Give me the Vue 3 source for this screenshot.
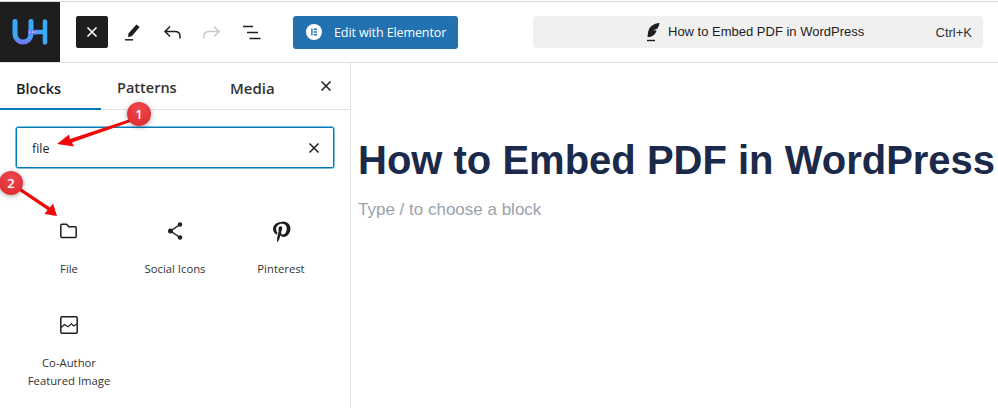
<script setup>
const blocks = [
  { label: 'File', icon: 'file' },
  { label: 'Social Icons', icon: 'share' },
  { label: 'Pinterest', icon: 'pin' },
  { label: 'Co-Author Featured Image', icon: 'image' },
]
</script>

<template>
  <div class="page">
    <header class="top">
      <div class="logo">
        <svg width="36" height="30" viewBox="0 0 36 30" fill="none">
          <defs>
            <linearGradient id="lg" x1="0" y1="0" x2="0" y2="1">
              <stop offset="0.72" stop-color="#38a9fb" />
              <stop offset="1" stop-color="#6f7cf8" />
            </linearGradient>
          </defs>
          <path d="M3 4.500V17a8 8 0 0 0 16 0V4.500" stroke="url(#lg)" stroke-width="5" stroke-linecap="round" />
          <path d="M33 4.500v21" stroke="#38a9fb" stroke-width="4.500" stroke-linecap="round" />
          <path d="M19 15h14" stroke="#38a9fb" stroke-width="4.500" />
          <rect x="16" y="13" width="9" height="4.500" rx="0.500" fill="#6f78f8" />
          <path d="M17.500 15.200h1M20 15.200h1M22.500 15.200h1" stroke="#fff" stroke-width="1.200" />
        </svg>
      </div>
      <div class="tools">
        <button class="closebtn">
          <svg width="24" height="24" viewBox="0 0 24 24"><path d="M7.500 7.500l9 9M16.500 7.500l-9 9" stroke="#fff" stroke-width="1.600" /></svg>
        </button>
        <svg class="tool first" width="24" height="24" viewBox="0 0 24 24"><path d="M16.500 4.500l3.200 2.600-7.700 8.900-4 1.300.6-4z" fill="#1e1e1e" /><path d="M5 19.800h8" stroke="#1e1e1e" stroke-width="1.500" /></svg>
        <svg class="tool" width="24" height="24" viewBox="0 0 24 24" fill="none"><path d="M20 18.500v-2.200c0-3-2-4.800-5-4.800H5.500M10 6.500l-5 5 5 5" stroke="#1e1e1e" stroke-width="1.500" /></svg>
        <svg class="tool" width="24" height="24" viewBox="0 0 24 24" fill="none"><path d="M4 18.500v-2.200c0-3 2-4.800 5-4.800h9.500M14 6.500l5 5-5 5" stroke="#c8c8c8" stroke-width="1.500" /></svg>
        <svg class="tool" width="24" height="24" viewBox="0 0 24 24" fill="none"><path d="M3 6.500h10M7 12.500h11M9.500 18.500h11" stroke="#1e1e1e" stroke-width="1.500" /></svg>
        <button class="elementor">
          <svg width="16" height="16" viewBox="0 0 16 16"><circle cx="8" cy="8" r="8" fill="#fff" /><path d="M5.200 4.500h1.400v7H5.200zM7.800 4.500h3.200v1.400H7.800zM7.800 7.300h3.200v1.400H7.800zM7.800 10.100h3.200v1.400H7.800z" fill="#2271b1" /></svg>
          <span class="eltext">Edit with Elementor</span>
        </button>
      </div>
      <div class="command">
        <div class="command-title">
          <svg width="18" height="20" viewBox="0 0 18 20"><path d="M15.500 1C9.500 1.500 5 4.500 4 10.500L3.500 15C8.500 15.300 12 12 12.500 8.200L9 8.500 13.500 6.500C14.500 5 15.200 3 15.500 1z" fill="#1e1e1e" /><path d="M3 18.500h8" stroke="#1e1e1e" stroke-width="1.400" /></svg>
          <span class="cmdtext">How to Embed PDF in WordPress</span>
        </div>
        <span class="shortcut">Ctrl+K</span>
      </div>
    </header>

    <div class="body">
      <aside class="side">
        <nav class="tabs">
          <div class="tab active">Blocks</div>
          <div class="tab">Patterns</div>
          <div class="tab">Media</div>
          <svg class="tabclose" width="24" height="24" viewBox="0 0 24 24"><path d="M7.500 7.500l9 9M16.500 7.500l-9 9" stroke="#1e1e1e" stroke-width="1.500" /></svg>
        </nav>
        <div class="search">
          <span class="query">file</span>
          <svg width="24" height="24" viewBox="0 0 24 24"><path d="M7.500 7.500l9 9M16.500 7.500l-9 9" stroke="#1e1e1e" stroke-width="1.500" /></svg>
        </div>
        <div class="grid">
          <div v-for="b in blocks" :key="b.label" class="item">
            <svg width="24" height="24" viewBox="0 0 24 24" fill="none">
              <path v-if="b.icon === 'file'" d="M3.800 6.300c0-.6.400-1 1-1h4.800l2.200 2.500h6.400c.6 0 1 .4 1 1v8.700c0 .6-.4 1-1 1H4.800c-.6 0-1-.4-1-1z" stroke="#1e1e1e" stroke-width="1.500" />
              <g v-else-if="b.icon === 'share'">
                <path d="M17 5.500L7.500 12l9.500 6.500" stroke="#1e1e1e" stroke-width="1.500" />
                <circle cx="17" cy="5.500" r="2.200" fill="#1e1e1e" />
                <circle cx="7.500" cy="12" r="2.500" fill="#1e1e1e" />
                <circle cx="17" cy="18.500" r="2.200" fill="#1e1e1e" />
              </g>
              <path v-else-if="b.icon === 'pin'" transform="translate(12 12) scale(1.060) translate(-12 -12)" fill="#1e1e1e" d="M12.300 3.500C7.900 3.500 4.500 6.500 4.500 10.200c0 2.300 1.300 4.400 3.200 5.100.3.100.5 0 .6-.3l.3-1.200c.1-.3 0-.4-.2-.7-.6-.7-1-1.600-1-2.800 0-2.700 2.100-5.100 5.400-5.100 3 0 4.600 1.800 4.600 4.200 0 3.200-1.400 5.900-3.500 5.900-1.200 0-2-1-1.700-2.200.3-1.400 1-2.900 1-3.900 0-.9-.5-1.700-1.500-1.700-1.200 0-2.100 1.200-2.100 2.800 0 1 .3 1.700.3 1.700l-1.400 5.900c-.3 1.300-.2 3.500-.1 4.500 0 .1.200.2.300.1.400-.5 1.400-1.800 1.800-3.200l.9-3.300c.4.800 1.700 1.600 3 1.600 3.900 0 6.500-3.500 6.500-8.100 0-3.500-3-6.500-7.100-6.500z" />
              <g v-else>
                <rect x="3.800" y="3.800" width="16.400" height="16.400" rx="1.200" stroke="#1e1e1e" stroke-width="1.500" />
                <path d="M4 14.500l3.500-3 3.500 2.200 3.500-2.800 2 2 3.500-2" stroke="#1e1e1e" stroke-width="1.200" />
              </g>
            </svg>
            <div class="label">{{ b.label }}</div>
          </div>
        </div>
      </aside>
      <main class="editor">
        <h1>How to Embed PDF in WordPress</h1>
        <p>Type / to choose a block</p>
      </main>
    </div>

    <svg class="arrow" width="998" height="408" viewBox="0 0 998 408">
      <path d="M57 144L69 134.500l1 4.500L129 119.500l1.500 2.500L72 142.500l2 4z" fill="#f00a0a" />
      <path d="M57 216L44.500 214l3-4L18 190l2-2.500 30 20 3-4z" fill="#f00a0a" />
    </svg>
    <div class="badge one">1</div>
    <div class="badge two">2</div>
  </div>
</template>

<style>
html, body { margin: 0; background: #fff; }
</style>

<style scoped>
.page {
  position: relative;
  width: 998px;
  height: 408px;
  overflow: hidden;
  background: #fff;
  font-family: "Open Sans", "Noto Sans", sans-serif;
  color: #1e1e1e;
}
.top {
  box-sizing: border-box;
  height: 62px;
  margin-top: 1px;
  display: flex;
  align-items: center;
  border-top: 1px solid #d4d4d4;
  border-bottom: 1px solid #e0e0e0;
}
.logo {
  width: 60px;
  height: 60px;
  background: #1e1e1e;
  display: flex;
  align-items: center;
  justify-content: center;
  flex: none;
}
.tools {
  display: flex;
  align-items: center;
  margin-left: 16px;
  flex: none;
}
.closebtn {
  width: 32px;
  height: 32px;
  padding: 0;
  border: 0;
  border-radius: 2px;
  background: #1e1e1e;
  display: flex;
  align-items: center;
  justify-content: center;
}
.tool { margin-left: 16px; flex: none; }
.tool.first { margin-left: 12px; }
.elementor {
  margin-left: 29px;
  width: 165px;
  height: 33px;
  padding: 0 0 0 13px;
  border: 0;
  border-radius: 3px;
  background: #2271b1;
  color: #fff;
  font: 12.500px "Open Sans", sans-serif;
  letter-spacing: -0.100px;
  display: flex;
  align-items: center;
  gap: 12px;
}
.eltext { padding-top: 1px; }
.command {
  box-sizing: border-box;
  width: 450px;
  height: 32px;
  margin-left: 75px;
  padding: 0 11px 0 0;
  background: #f0f0f0;
  border-radius: 4px;
  display: flex;
  align-items: center;
  justify-content: space-between;
  font: 13px/1 "Liberation Sans", sans-serif;
  position: relative;
}
.command-title {
  margin-left: 111px;
  display: flex;
  align-items: center;
  gap: 6px;
  font-size: 13px;
}
.cmdtext { padding-bottom: 1px; }
.shortcut { color: #333; }
.body { display: flex; height: 345px; }
.side {
  box-sizing: border-box;
  width: 351px;
  border-right: 1px solid #e0e0e0;
  flex: none;
}
.tabs {
  display: flex;
  align-items: stretch;
  height: 47px;
  border-bottom: 1px solid #e0e0e0;
  position: relative;
  box-sizing: border-box;
}
.tab {
  width: 101px;
  display: flex;
  align-items: center;
  justify-content: flex-start;
  padding: 3px 0 0 16px;
  box-sizing: border-box;
  font-size: 14.500px;
  font-weight: 600;
  color: #333;
}
.tab:nth-child(2) { width: 114px; }
.tab:nth-child(3) { width: 97px; font-size: 15px; padding-left: 15px; }
.tab.active { box-shadow: inset 0 -2px 0 #007cba; height: 47px; color: #1e1e1e; }
.tabclose { align-self: center; margin-left: 2px; }
.search {
  box-sizing: border-box;
  height: 41px;
  margin: 17px 16px 0;
  padding: 0 7px 0 15px;
  border: 1px solid #007cba;
  box-shadow: 0 0 0 0.500px #007cba;
  border-radius: 2px;
  display: flex;
  align-items: center;
  justify-content: space-between;
  font-size: 12.500px;
}
.query { padding-top: 2px; }
.grid {
  display: grid;
  grid-template-columns: repeat(3, 106px);
  margin: 0 0 0 16px;
  padding-top: 39px;
}
.item {
  height: 94px;
  padding-top: 12px;
  box-sizing: border-box;
  display: flex;
  flex-direction: column;
  align-items: center;
  text-align: center;
}
.label {
  width: 90px;
  margin-top: 17px;
  font-size: 11.300px;
  line-height: 18px;
  color: #333;
}
.editor {
  padding: 74px 0 0 7px;
  white-space: nowrap;
}
h1 {
  margin: 0;
  font: 700 40px/46px "Liberation Sans", sans-serif;
  color: #1b2a4a;
}
p {
  margin: 17px 0 0 0;
  font: 17px/20px "Liberation Sans", sans-serif;
  color: #9aa2ae;
}
.arrow { position: absolute; left: 0; top: 0; pointer-events: none; }
.badge {
  position: absolute;
  width: 24px;
  height: 24px;
  border-radius: 50%;
  background: radial-gradient(circle at 50% 30%, #f0494f, #d9252b);
  color: #fff;
  font: 600 13px/24px "Open Sans", sans-serif;
  text-align: center;
  box-shadow: 0 1px 5px rgba(0, 0, 0, 0.35);
}
.one { left: 127px; top: 102px; }
.two { left: -1px; top: 171px; }
</style>
